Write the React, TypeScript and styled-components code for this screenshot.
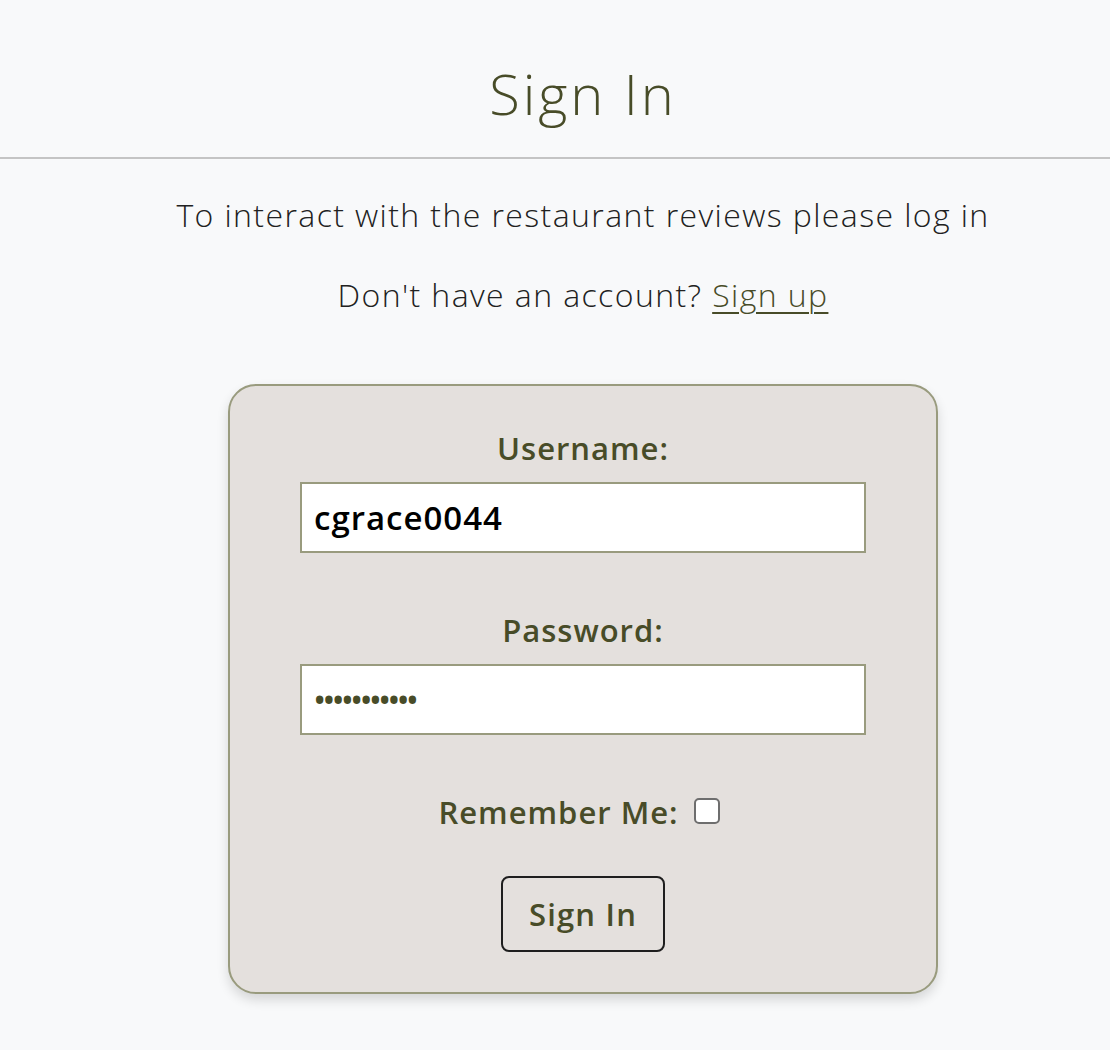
import styled, { createGlobalStyle } from "styled-components";

const GlobalStyle = createGlobalStyle`
	html, body {
		margin: 0;
		padding: 0;
		background: #f8f9fa;
	}

	body {
		font-family: "Open Sans", "Liberation Sans", sans-serif;
		color: #212121;
	}
`;

const olive = "#484c28";

const Header = styled.header`
	padding: 60px 0 30px 56px;
	border-bottom: 2px solid #c4c4c4;
	text-align: center;
`;

const Title = styled.h1`
	margin: 0;
	font-size: 56px;
	line-height: 67px;
	font-weight: 300;
	color: ${olive};
	letter-spacing: 2.9px;
`;

const Main = styled.main`
	padding: 33px 0 56px 56px;
	display: flex;
	flex-direction: column;
	align-items: center;
`;

const Intro = styled.p`
	margin: 0 0 35px 0;
	font-size: 32px;
	line-height: 45px;
	font-weight: 300;
	text-align: center;
	letter-spacing: 1.4px;
`;

const SignUpLink = styled.a`
	color: ${olive};
	text-decoration: underline;
	text-decoration-thickness: 2px;
	text-underline-offset: 5px;
`;

const Card = styled.form`
	margin-top: 32px;
	width: 710px;
	box-sizing: border-box;
	padding: 40px 0 40px 0;
	background: #e4e0dd;
	border: 2px solid #999b7e;
	border-radius: 28px;
	box-shadow: 0 6px 12px rgba(0, 0, 0, 0.14);
	display: flex;
	flex-direction: column;
	align-items: center;
`;

const Label = styled.label<{ $gap?: number }>`
	display: block;
	margin-top: ${(props) => props.$gap ?? 0}px;
	font-size: 31px;
	line-height: 45px;
	font-weight: 600;
	color: ${olive};
	letter-spacing: 1px;
`;

const Field = styled.input`
	margin-top: 11px;
	width: 566px;
	height: 71px;
	box-sizing: border-box;
	padding: 0 12px;
	border: 2px solid #999b7e;
	background: #fff;
	font-family: inherit;
	font-size: 33px;
	font-weight: 600;
	color: #000;
	letter-spacing: 1px;
	outline: none;

	&[type="password"] {
		color: ${olive};
		font-size: 30px;
		letter-spacing: -2px;
	}
`;

const RememberRow = styled.div`
	margin-top: 55px;
	display: flex;
	align-items: center;
	gap: 15px;
	padding-right: 8px;
`;

const Check = styled.input`
	appearance: none;
	margin: 0 0 4px 0;
	width: 26px;
	height: 26px;
	box-sizing: border-box;
	background: #fff;
	border: 2px solid #6e6e6e;
	border-radius: 5px;
`;

const SubmitButton = styled.button`
	margin-top: 41px;
	width: 164px;
	height: 76px;
	box-sizing: border-box;
	background: transparent;
	border: 2px solid #1e1e1e;
	border-radius: 8px;
	font-family: inherit;
	font-size: 31px;
	font-weight: 600;
	color: ${olive};
	letter-spacing: 1.2px;
	cursor: pointer;
`;

export default function App(): JSX.Element {
	return (
		<>
			<GlobalStyle />

			<Header>
				<Title>Sign In</Title>
			</Header>

			<Main>
				<Intro>To interact with the restaurant reviews please log in</Intro>
				<Intro>
					Don't have an account? <SignUpLink href={"/#"}>Sign up</SignUpLink>
				</Intro>

				<Card onSubmit={(e) => e.preventDefault()}>
					<Label htmlFor="id_login">Username:</Label>
					<Field id="id_login" type="text" defaultValue="cgrace0044" />

					<Label htmlFor="id_password" $gap={55}>Password:</Label>
					<Field id="id_password" type="password" defaultValue="password123" />

					<RememberRow>
						<Label htmlFor="id_remember">Remember Me:</Label>
						<Check id="id_remember" type="checkbox" />
					</RememberRow>

					<SubmitButton type="submit">Sign In</SubmitButton>
				</Card>
			</Main>
		</>
	);
}
